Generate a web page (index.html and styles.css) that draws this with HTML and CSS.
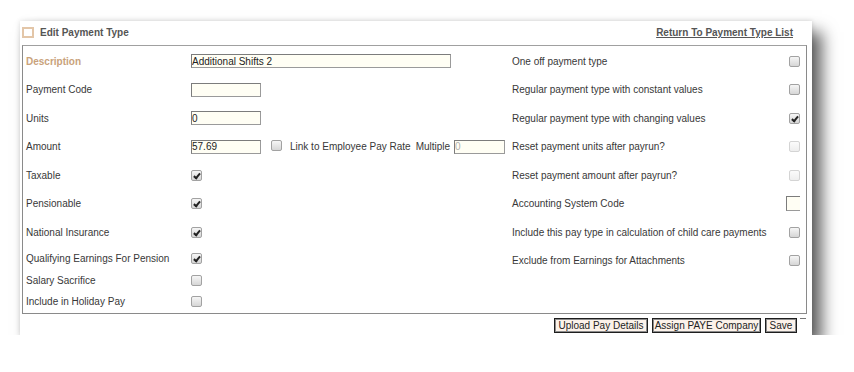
FILE: index.html
```html
<!DOCTYPE html>
<html lang="en">

<head>
    <meta charset="UTF-8">
    <meta name="viewport" content="width=device-width, initial-scale=1.0">
    <title>Edit Payment Type</title>
    <link rel="stylesheet" href="styles.css">
</head>

<body>
    <section class="pay-window">
        <div class="pay-head">
            <span class="head-box"></span>
            <span class="head-title">Edit Payment Type</span>
            <a class="head-link" href="#">Return To Payment Type List</a>
        </div>

        <div class="pay-form">
            <div class="pane pane-left">
                <div class="row">
                    <label class="lbl lbl-key">Description</label>
                    <input type="text" class="txt txt-wide" value="Additional Shifts 2">
                </div>
                <div class="row">
                    <label class="lbl">Payment Code</label>
                    <input type="text" class="txt" value="">
                </div>
                <div class="row">
                    <label class="lbl">Units</label>
                    <input type="text" class="txt" value="0">
                </div>
                <div class="row">
                    <label class="lbl">Amount</label>
                    <div class="amount-group">
                        <input type="text" class="txt" value="57.69">
                        <input type="checkbox" class="chk chk-link">
                        <span class="link-lbl">Link to Employee Pay Rate</span>
                        <span class="mult-lbl">Multiple</span>
                        <input type="text" class="txt txt-mult" value="0" disabled>
                    </div>
                </div>
                <div class="row">
                    <label class="lbl">Taxable</label>
                    <input type="checkbox" class="chk" checked>
                </div>
                <div class="row">
                    <label class="lbl">Pensionable</label>
                    <input type="checkbox" class="chk" checked>
                </div>
                <div class="row">
                    <label class="lbl">National Insurance</label>
                    <input type="checkbox" class="chk" checked>
                </div>
                <div class="row row-q">
                    <label class="lbl">Qualifying Earnings For Pension</label>
                    <input type="checkbox" class="chk" checked>
                </div>
                <div class="row row-s">
                    <label class="lbl">Salary Sacrifice</label>
                    <input type="checkbox" class="chk">
                </div>
                <div class="row row-h">
                    <label class="lbl">Include in Holiday Pay</label>
                    <input type="checkbox" class="chk">
                </div>
            </div>

            <div class="pane pane-right">
                <div class="row">
                    <span class="lbl">One off payment type</span>
                    <input type="checkbox" class="chk">
                </div>
                <div class="row">
                    <span class="lbl">Regular payment type with constant values</span>
                    <input type="checkbox" class="chk">
                </div>
                <div class="row">
                    <span class="lbl">Regular payment type with changing values</span>
                    <input type="checkbox" class="chk" checked>
                </div>
                <div class="row">
                    <span class="lbl">Reset payment units after payrun?</span>
                    <input type="checkbox" class="chk" disabled>
                </div>
                <div class="row">
                    <span class="lbl">Reset payment amount after payrun?</span>
                    <input type="checkbox" class="chk" disabled>
                </div>
                <div class="row">
                    <span class="lbl">Accounting System Code</span>
                    <input type="text" class="txt txt-code" value="">
                </div>
                <div class="row">
                    <span class="lbl">Include this pay type in calculation of child care payments</span>
                    <input type="checkbox" class="chk">
                </div>
                <div class="row">
                    <span class="lbl">Exclude from Earnings for Attachments</span>
                    <input type="checkbox" class="chk">
                </div>
            </div>
        </div>

        <div class="pay-foot">
            <button class="btn btn-upload">Upload Pay Details</button>
            <button class="btn btn-paye">Assign PAYE Company</button>
            <button class="btn btn-save">Save</button>
            <span class="foot-tick"></span>
        </div>
    </section>
</body>

</html>
```

FILE: styles.css
```css
* {
    margin: 0;
    padding: 0;
    box-sizing: border-box;
}

body {
    background: #fff;
    font-family: "Liberation Sans", Arial, sans-serif;
    font-size: 10px;
    color: #383838;
}

.pay-window {
    margin: 21px 0 0 20px;
    width: 792px;
    height: 314px;
    padding: 0 5px 0 2px;
    background: #fff;
    box-shadow: 10px 11px 15px rgba(0, 0, 0, 0.62), 0 0 5px rgba(0, 0, 0, 0.14);
}

.pay-head {
    display: flex;
    align-items: center;
    height: 24px;
    padding-bottom: 1px;
}

.head-box {
    width: 12px;
    height: 11px;
    border: 2px solid #e3c6a8;
    margin-right: 6px;
}

.head-title {
    font-weight: bold;
    color: #555;
}

.head-link {
    margin-left: auto;
    margin-right: 14px;
    font-weight: bold;
    color: #555;
    text-decoration: underline;
}

.pay-form {
    display: grid;
    grid-template-columns: 489px 1fr;
    height: 269px;
    border: 1px solid #8a8a8a;
    border-top-color: #a0a0a0;
    overflow: hidden;
}

.pane {
    padding-top: 1px;
}

.pane-left {
    padding-left: 3px;
}

.pane-left .row {
    display: grid;
    grid-template-columns: 165px auto;
    align-items: center;
    justify-items: start;
    height: 28.5px;
}

.pane-left .row-q {
    height: 23px;
}

.pane-left .row-s {
    height: 22px;
}

.pane-left .row-h {
    height: 20px;
}

.pane-right {
    padding-right: 6px;
}

.pane-right .row {
    display: flex;
    align-items: center;
    justify-content: space-between;
    height: 28.5px;
}

.lbl-key {
    font-weight: bold;
    color: #c9a27b;
}

.txt {
    width: 70px;
    height: 14px;
    border: 1px solid #7c7c7c;
    border-right-color: #9a9a9a;
    border-bottom-color: #9a9a9a;
    background: #fffef4;
    font-family: "Liberation Sans", Arial, sans-serif;
    font-size: 10px;
    color: #222;
    padding: 0;
    outline: none;
}

.txt-wide {
    width: 260px;
}

.txt-mult {
    width: 51px;
    margin-left: 4px;
    color: #b0b0b0;
}

.txt-code {
    width: 14px;
    height: 15px;
    border-right: none;
}

.amount-group {
    display: flex;
    align-items: center;
}

.chk {
    appearance: none;
    -webkit-appearance: none;
    position: relative;
    width: 11px;
    height: 11px;
    border: 1px solid #a2a2a2;
    border-radius: 2px;
    background: linear-gradient(#f6f6f6, #d6d6d6);
}

.chk:checked::before {
    content: "";
    position: absolute;
    left: 3px;
    top: 1px;
    width: 2px;
    height: 5px;
    border-right: 2px solid #222;
    border-bottom: 2px solid #222;
    transform: rotate(40deg);
}

.chk:disabled {
    border-color: #d4d4d4;
    background: linear-gradient(#fbfbfb, #eeeeee);
}

.chk-link {
    margin: -3px 0 0 10px;
}

.link-lbl {
    margin-left: 8px;
}

.mult-lbl {
    margin-left: 5px;
}

.pay-foot {
    display: flex;
    justify-content: flex-end;
    align-items: flex-start;
    gap: 4px;
    padding: 4px 7px 0 0;
}

.btn {
    height: 15px;
    padding: 0;
    border: 1px solid #1e1e1e;
    box-shadow: inset 0 0 0 1px #8c8c8c;
    background: #fcf2ea;
    font-family: "Liberation Sans", Arial, sans-serif;
    font-size: 10px;
    color: #222;
    text-align: center;
}

.btn-upload {
    width: 94px;
}

.btn-paye {
    width: 109px;
}

.btn-save {
    width: 32px;
}

.foot-tick {
    width: 6px;
    height: 1px;
    margin: 0 -6px 0 -1px;
    background: #777;
}
```
